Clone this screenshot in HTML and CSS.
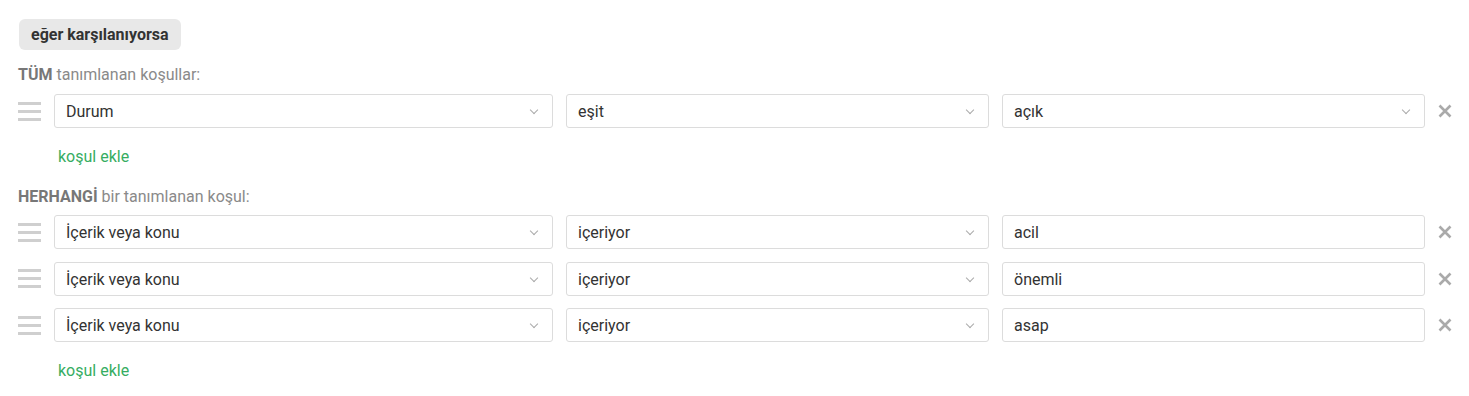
FILE: index.html
```html
<!DOCTYPE html>
<html lang="tr">
<head>
<meta charset="utf-8">
<link rel="stylesheet" href="styles.css">
</head>
<body>
<div class="rules">
  <div class="badge">eğer karşılanıyorsa</div>

  <div class="group-title"><b>TÜM</b> tanımlanan koşullar:</div>
  <div class="row first">
    <span class="drag"><i></i><i></i><i></i></span>
    <div class="field select">Durum<span class="chev"></span></div>
    <div class="field select">eşit<span class="chev"></span></div>
    <div class="field select">açık<span class="chev"></span></div>
    <span class="remove"><svg viewBox="0 0 14 14" width="14" height="14"><path d="M1.5 1.5L12.5 12.5M12.5 1.5L1.5 12.5"/></svg></span>
  </div>
  <div class="add">koşul ekle</div>

  <div class="group-title second"><b>HERHANGİ</b> bir tanımlanan koşul:</div>
  <div class="row first-any">
    <span class="drag"><i></i><i></i><i></i></span>
    <div class="field select">İçerik veya konu<span class="chev"></span></div>
    <div class="field select">içeriyor<span class="chev"></span></div>
    <div class="field">acil</div>
    <span class="remove"><svg viewBox="0 0 14 14" width="14" height="14"><path d="M1.5 1.5L12.5 12.5M12.5 1.5L1.5 12.5"/></svg></span>
  </div>
  <div class="row">
    <span class="drag"><i></i><i></i><i></i></span>
    <div class="field select">İçerik veya konu<span class="chev"></span></div>
    <div class="field select">içeriyor<span class="chev"></span></div>
    <div class="field">önemli</div>
    <span class="remove"><svg viewBox="0 0 14 14" width="14" height="14"><path d="M1.5 1.5L12.5 12.5M12.5 1.5L1.5 12.5"/></svg></span>
  </div>
  <div class="row">
    <span class="drag"><i></i><i></i><i></i></span>
    <div class="field select">İçerik veya konu<span class="chev"></span></div>
    <div class="field select">içeriyor<span class="chev"></span></div>
    <div class="field">asap</div>
    <span class="remove"><svg viewBox="0 0 14 14" width="14" height="14"><path d="M1.5 1.5L12.5 12.5M12.5 1.5L1.5 12.5"/></svg></span>
  </div>
  <div class="add">koşul ekle</div>
</div>
</body>
</html>
```

FILE: styles.css
```css
html, body {
  margin: 0;
  padding: 0;
  background: #ffffff;
}
body {
  font-family: Roboto, "Liberation Sans", sans-serif;
  color: #333;
}
.rules {
  padding: 19px 18px 0 18px;
}
.badge {
  display: inline-block;
  margin-left: 1px;
  height: 31px;
  line-height: 31px;
  padding: 0 12px;
  background: #e8e8e8;
  border-radius: 6px;
  font-size: 16px;
  font-weight: 700;
  color: #333;
}
.group-title {
  margin-top: 15px;
  line-height: 20px;
  font-size: 16px;
  color: #8a8a8a;
}
.group-title b {
  color: #777;
  font-weight: 700;
}
.group-title.second {
  margin-top: 20px;
}
.row {
  display: grid;
  grid-template-columns: 23px 499fr 423fr 423fr 13px;
  column-gap: 13px;
  align-items: center;
  margin-top: 12.5px;
}
.row.first {
  margin-top: 9px;
}
.row.first-any {
  margin-top: 8px;
}
.drag {
  display: flex;
  flex-direction: column;
  gap: 5px;
}
.drag i {
  display: block;
  height: 3px;
  background: #cfcfcf;
}
.field {
  position: relative;
  height: 34px;
  box-sizing: border-box;
  border: 1px solid #dcdcdc;
  border-radius: 3px;
  padding: 1px 30px 0 11px;
  line-height: 32px;
  font-size: 16px;
  color: #333;
  white-space: nowrap;
}
.chev {
  position: absolute;
  right: 15px;
  top: 12px;
  width: 5px;
  height: 5px;
  border-right: 1px solid #aaa;
  border-bottom: 1px solid #aaa;
  transform: rotate(45deg);
}
.remove {
  display: flex;
  align-items: center;
  justify-content: center;
  height: 34px;
}
.remove svg {
  flex: none;
  stroke: #aaa;
  stroke-width: 2.6;
  fill: none;
}
.add {
  margin-top: 19px;
  margin-left: 40px;
  line-height: 20px;
  font-size: 16px;
  color: #36ad62;
}
```
